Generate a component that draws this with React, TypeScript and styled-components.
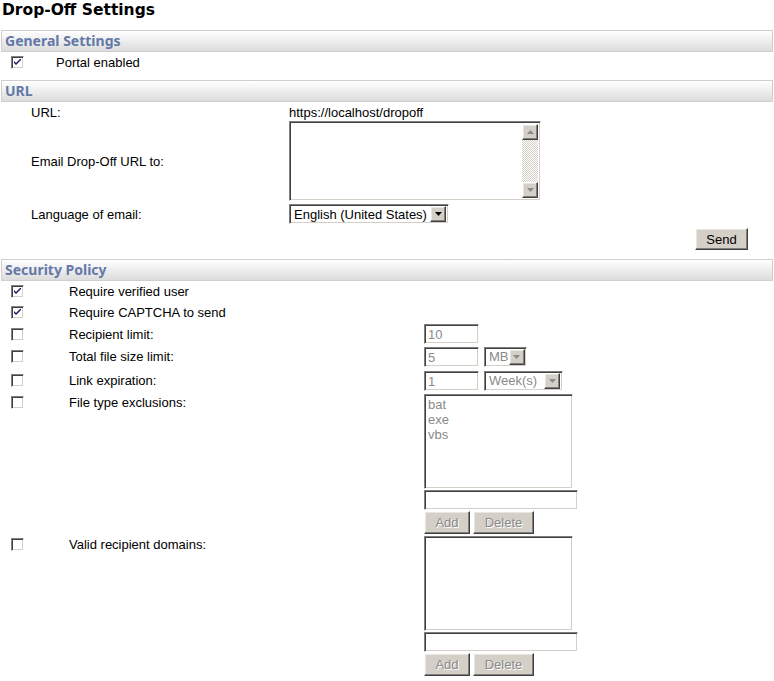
import styled, { createGlobalStyle, css } from 'styled-components';

const GlobalStyle = createGlobalStyle`
  html, body {
    margin: 0;
    padding: 0;
    background: #fff;
  }
  body {
    font-family: "Liberation Sans", Arial, sans-serif;
    font-size: 13px;
    color: #000;
  }
`;

const inset = css`
  box-sizing: border-box;
  border: 1px solid;
  border-color: #808080 #fff #fff #808080;
  box-shadow: inset 1px 1px #404040, inset -1px -1px #d4d0c8;
  background: #fff;
`;

const outset = css`
  box-sizing: border-box;
  border: 1px solid;
  border-color: #fff #404040 #404040 #fff;
  box-shadow: inset -1px -1px #808080, inset 1px 1px #e8e6e0;
  background: #d4d0c8;
`;

const Page = styled.div`
  width: 774px;
  padding: 0 1px 4px 1px;
  box-sizing: border-box;
`;

const Title = styled.h1`
  margin: 0;
  height: 30px;
  padding: 0 0 0 1px;
  font-family: "DejaVu Sans", Verdana, sans-serif;
  font-size: 15.5px;
  font-weight: bold;
  line-height: 20px;
`;

const Bar = styled.div<{ $mt?: number }>`
  margin-top: ${({ $mt }) => $mt ?? 0}px;
  height: 22px;
  box-sizing: border-box;
  border: 1px solid #cfcfcf;
  background: linear-gradient(#ffffff, #dcdcdc);
  padding-left: 3px;
  font-family: "Noto Sans", "DejaVu Sans", sans-serif;
  font-size: 14px;
  font-weight: bold;
  line-height: 19px;
  color: #6479a8;
`;

const Row = styled.div<{ $h: number; $top?: boolean }>`
  display: flex;
  align-items: ${({ $top }) => ($top ? 'flex-start' : 'center')};
  height: ${({ $h }) => $h}px;
`;

const Cell = styled.div<{ $w?: number; $pl?: number; $pt?: number }>`
  ${({ $w }) => ($w ? `width: ${$w}px; flex: none;` : 'flex: 1;')}
  padding-left: ${({ $pl }) => $pl ?? 0}px;
  padding-top: ${({ $pt }) => $pt ?? 0}px;
  box-sizing: border-box;
  display: flex;
  align-items: center;
  gap: 5px;
`;

const Stack = styled.div`
  display: flex;
  flex-direction: column;
  gap: 1px;
  padding-top: 1px;
`;

const BoxWrap = styled.span`
  ${inset};
  width: 13px;
  height: 13px;
  display: inline-flex;
  align-items: center;
  justify-content: center;
`;

const Checkbox = ({ checked }: { checked?: boolean }) => (
  <BoxWrap>
    {checked && (
      <svg width="7" height="7" viewBox="0 0 7 7">
        <path d="M0 2 L0 4 L2 6 L7 1 L7 -1 L2 4 Z" fill="#1a1a60" />
      </svg>
    )}
  </BoxWrap>
);

const TextInput = styled.div<{ $w: number; $disabled?: boolean }>`
  ${inset};
  width: ${({ $w }) => $w}px;
  height: 20px;
  padding: 2px 3px;
  line-height: 15px;
  color: ${({ $disabled }) => ($disabled ? '#8a8a8a' : '#000')};
`;

const SelectBox = styled.div<{ $w: number; $disabled?: boolean }>`
  ${inset};
  width: ${({ $w }) => $w}px;
  height: 20px;
  padding: 2px 2px 2px 4px;
  display: flex;
  align-items: center;
  justify-content: space-between;
  color: ${({ $disabled }) => ($disabled ? '#8a8a8a' : '#000')};
  white-space: nowrap;
`;

const ArrowBtn = styled.span`
  ${outset};
  width: 16px;
  height: 16px;
  display: inline-flex;
  align-items: center;
  justify-content: center;
  flex: none;
`;

const Arrow = ({ up, disabled }: { up?: boolean; disabled?: boolean }) => (
  <svg width="7" height="4" viewBox="0 0 7 4">
    <path
      d={up ? 'M3.5 0 L7 4 L0 4 Z' : 'M0 0 L7 0 L3.5 4 Z'}
      fill={disabled ? '#8a8a8a' : '#000'}
    />
  </svg>
);

const Select = ({ w, value, disabled }: { w: number; value: string; disabled?: boolean }) => (
  <SelectBox $w={w} $disabled={disabled}>
    <span>{value}</span>
    <ArrowBtn>
      <Arrow disabled={disabled} />
    </ArrowBtn>
  </SelectBox>
);

const TextArea = styled.div`
  ${inset};
  width: 252px;
  height: 80px;
  display: flex;
  justify-content: flex-end;
  padding: 2px;
`;

const ScrollTrack = styled.div`
  width: 16px;
  display: flex;
  flex-direction: column;
  justify-content: space-between;
  background: repeating-conic-gradient(#ffffff 0 25%, #d4d0c8 0 50%) 0 0 / 2px 2px;
`;

const ListBox = styled.div`
  ${inset};
  width: 149px;
  height: 95px;
  padding: 2px 3px;
  line-height: 15px;
  color: #8a8a8a;
`;

const Button = styled.div<{ $w: number; $h?: number; $disabled?: boolean }>`
  ${outset};
  width: ${({ $w }) => $w}px;
  height: ${({ $h }) => $h ?? 23}px;
  display: flex;
  align-items: center;
  justify-content: center;
  color: ${({ $disabled }) => ($disabled ? '#8a8a8a' : '#000')};
  text-shadow: ${({ $disabled }) => ($disabled ? '1px 1px #fff' : 'none')};
`;

const Buttons = styled.div`
  display: flex;
  gap: 3px;
`;

const SendRow = styled.div`
  display: flex;
  justify-content: flex-end;
  align-items: flex-start;
  padding: 1px 25px 0 0;
  height: 32px;
  box-sizing: border-box;
`;

const ListEditor = ({ items }: { items: string[] }) => (
  <Stack>
    <ListBox>
      {items.map((it) => (
        <div key={it}>{it}</div>
      ))}
    </ListBox>
    <TextInput $w={154} />
    <Buttons>
      <Button $w={46} $disabled>
        Add
      </Button>
      <Button $w={61} $disabled>
        Delete
      </Button>
    </Buttons>
  </Stack>
);

const policy = [
  { label: 'Require verified user', checked: true },
  { label: 'Require CAPTCHA to send', checked: true },
];

export default function App() {
  return (
    <Page>
      <GlobalStyle />
      <Title>Drop-Off Settings</Title>

      <Bar>General Settings</Bar>
      <Row $h={20}>
        <Cell $w={55} $pl={10}>
          <Checkbox checked />
        </Cell>
        <Cell>Portal enabled</Cell>
      </Row>

      <Bar $mt={8}>URL</Bar>
      <Row $h={19}>
        <Cell $w={288} $pl={30} $pt={1}>URL:</Cell>
        <Cell $pt={1}>https://localhost/dropoff</Cell>
      </Row>
      <Row $h={80}>
        <Cell $w={288} $pl={30}>Email Drop-Off URL to:</Cell>
        <Cell>
          <TextArea>
            <ScrollTrack>
              <ArrowBtn>
                <Arrow up disabled />
              </ArrowBtn>
              <ArrowBtn>
                <Arrow disabled />
              </ArrowBtn>
            </ScrollTrack>
          </TextArea>
        </Cell>
      </Row>
      <Row $h={26}>
        <Cell $w={288} $pl={30}>Language of email:</Cell>
        <Cell>
          <Select w={160} value="English (United States)" />
        </Cell>
      </Row>
      <SendRow>
        <Button $w={53} $h={22}>
          Send
        </Button>
      </SendRow>

      <Bar>Security Policy</Bar>
      {policy.map((p) => (
        <Row $h={21} key={p.label}>
          <Cell $w={68} $pl={10}>
            <Checkbox checked={p.checked} />
          </Cell>
          <Cell>{p.label}</Cell>
        </Row>
      ))}
      <Row $h={22}>
        <Cell $w={68} $pl={10}>
          <Checkbox />
        </Cell>
        <Cell $w={355}>Recipient limit:</Cell>
        <Cell>
          <TextInput $w={55} $disabled>
            10
          </TextInput>
        </Cell>
      </Row>
      <Row $h={23}>
        <Cell $w={68} $pl={10}>
          <Checkbox />
        </Cell>
        <Cell $w={355}>Total file size limit:</Cell>
        <Cell>
          <TextInput $w={55} $disabled>
            5
          </TextInput>
          <Select w={43} value="MB" disabled />
        </Cell>
      </Row>
      <Row $h={25}>
        <Cell $w={68} $pl={10}>
          <Checkbox />
        </Cell>
        <Cell $w={355}>Link expiration:</Cell>
        <Cell>
          <TextInput $w={55} $disabled>
            1
          </TextInput>
          <Select w={79} value="Week(s)" disabled />
        </Cell>
      </Row>
      <Row $h={142} $top>
        <Cell $w={68} $pl={10} $pt={3}>
          <Checkbox />
        </Cell>
        <Cell $w={355} $pt={2}>File type exclusions:</Cell>
        <Cell>
          <ListEditor items={['bat', 'exe', 'vbs']} />
        </Cell>
      </Row>
      <Row $h={142} $top>
        <Cell $w={68} $pl={10} $pt={3}>
          <Checkbox />
        </Cell>
        <Cell $w={355} $pt={2}>Valid recipient domains:</Cell>
        <Cell>
          <ListEditor items={[]} />
        </Cell>
      </Row>
    </Page>
  );
}
